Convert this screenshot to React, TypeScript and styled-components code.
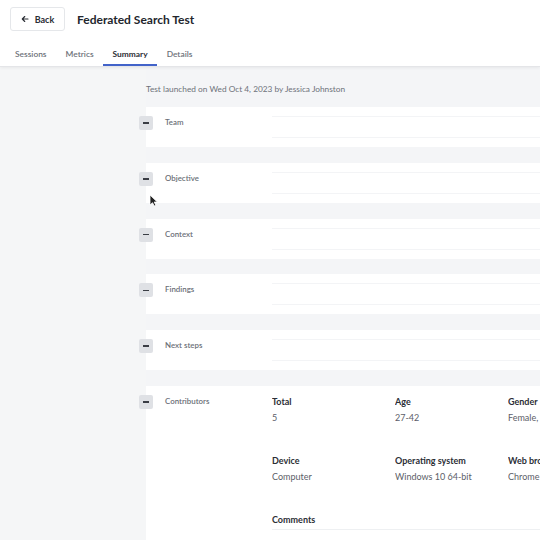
import React from "react";
import styled, { createGlobalStyle } from "styled-components";

const GlobalStyle = createGlobalStyle`
  * { box-sizing: border-box; }
  html, body { margin: 0; padding: 0; }
  body {
    font-family: "Lato", "Liberation Sans", sans-serif;
    background: #f4f5f7;
    color: #2b2e35;
    overflow: hidden;
  }
`;

const Page = styled.div`
  width: 540px;
  height: 540px;
  display: flex;
  flex-direction: column;
  position: relative;
  overflow: hidden;
`;

const Header = styled.header`
  background: #fff;
  border-bottom: 1px solid #e4e5e8;
  box-shadow: 0 1px 3px rgba(0, 0, 0, 0.06);
  position: relative;
  z-index: 1;
`;

const TopRow = styled.div`
  height: 40px;
  display: flex;
  align-items: center;
  gap: 12px;
  padding: 0 0 2px 10px;
`;

const BackButton = styled.button`
  height: 24px;
  width: 55px;
  display: flex;
  align-items: center;
  justify-content: center;
  gap: 6px;
  border: 1px solid #e5e7ea;
  border-radius: 3px;
  background: #fff;
  font-family: inherit;
  font-weight: 700;
  font-size: 9px;
  color: #2b2e35;
  padding: 0;
`;

const Title = styled.h1`
  margin: 0;
  font-size: 12px;
  font-weight: 700;
  color: #23262d;
`;

const Tabs = styled.nav`
  display: flex;
  height: 26px;
  padding-left: 5.5px;
`;

const Tab = styled.div<{ $active?: boolean }>`
  padding: 4px 9.5px 0;
  display: flex;
  align-items: center;
  font-size: 8.4px;
  font-weight: ${(p) => (p.$active ? 700 : 600)};
  color: ${(p) => (p.$active ? "#2b2e35" : "#6e727a")};
  border-bottom: 2px solid ${(p) => (p.$active ? "#4263c9" : "transparent")};
`;

const Body = styled.main`
  flex: 1;
  display: grid;
  grid-template-columns: 146px 1fr;
`;

const Side = styled.div`
  background: #f5f6f7;
`;

const Content = styled.div`
  padding-top: 16px;
  display: flex;
  flex-direction: column;
`;

const Launched = styled.div`
  font-size: 8.3px;
  line-height: 12px;
  color: #6e727a;
  margin-bottom: 12px;
`;

const Cards = styled.div`
  display: flex;
  flex-direction: column;
  gap: 15.8px;
`;

const Card = styled.section<{ $grow?: boolean }>`
  background: #fff;
  height: ${(p) => (p.$grow ? "auto" : "40px")};
  padding-top: 9px;
  padding-bottom: ${(p) => (p.$grow ? "40px" : "0")};
  display: flex;
  align-items: flex-start;
`;

const Toggle = styled.button`
  width: 14px;
  height: 14px;
  margin-left: -7px;
  border: none;
  border-radius: 2px;
  background: #dfe1e5;
  padding: 0;
  display: flex;
  align-items: center;
  justify-content: center;
  flex-shrink: 0;

  &::after {
    content: "";
    width: 6px;
    height: 1.5px;
    background: #3a3d44;
  }
`;

const Label = styled.div`
  width: 107px;
  margin-left: 12px;
  font-size: 7.9px;
  font-weight: 600;
  line-height: 13px;
  color: #6b6f77;
  flex-shrink: 0;
`;

const Field = styled.div`
  flex: 1;
  height: 22px;
  border-top: 1px solid #f3f4f6;
  border-bottom: 1px solid #f3f4f6;
`;

const Stats = styled.div`
  flex: 1;
  display: grid;
  grid-template-columns: 123px 113px 1fr;
  row-gap: 29px;
`;

const Stat = styled.div`
  display: flex;
  flex-direction: column;
  gap: 2px;
  white-space: nowrap;
  overflow: hidden;
`;

const StatTitle = styled.div`
  font-size: 9px;
  font-weight: 700;
  line-height: 14px;
  color: #2b2e35;
`;

const StatValue = styled.div`
  font-size: 9px;
  line-height: 14px;
  color: #5c6068;
`;

const Comments = styled.div`
  grid-column: 1 / -1;
  font-size: 9px;
  font-weight: 700;
  line-height: 14px;
  color: #2b2e35;
  border-bottom: 1px solid #eef0f2;
  padding-bottom: 2px;
`;

const Cursor = styled.svg`
  position: absolute;
  left: 149px;
  top: 194px;
  z-index: 2;
`;

const sections = ["Team", "Objective", "Context", "Findings", "Next steps"];

const stats = [
  { title: "Total", value: "5" },
  { title: "Age", value: "27-42" },
  { title: "Gender", value: "Female, Male" },
  { title: "Device", value: "Computer" },
  { title: "Operating system", value: "Windows 10 64-bit" },
  { title: "Web browser", value: "Chrome" },
];

export default function App() {
  return (
    <Page>
      <GlobalStyle />
      <Header>
        <TopRow>
          <BackButton>
            <svg width="8" height="8" viewBox="0 0 16 16" fill="none">
              <path
                d="M14 8H3M7.5 3L2.5 8l5 5"
                stroke="#2b2e35"
                strokeWidth="2.2"
                strokeLinecap="round"
                strokeLinejoin="round"
              />
            </svg>
            Back
          </BackButton>
          <Title>Federated Search Test</Title>
        </TopRow>
        <Tabs>
          <Tab>Sessions</Tab>
          <Tab>Metrics</Tab>
          <Tab $active>Summary</Tab>
          <Tab>Details</Tab>
        </Tabs>
      </Header>
      <Body>
        <Side />
        <Content>
          <Launched>Test launched on Wed Oct 4, 2023 by Jessica Johnston</Launched>
          <Cards>
            {sections.map((s) => (
              <Card key={s}>
                <Toggle aria-label={`Collapse ${s}`} />
                <Label>{s}</Label>
                <Field />
              </Card>
            ))}
            <Card $grow>
              <Toggle aria-label="Collapse Contributors" />
              <Label>Contributors</Label>
              <Stats>
                {stats.map((st) => (
                  <Stat key={st.title}>
                    <StatTitle>{st.title}</StatTitle>
                    <StatValue>{st.value}</StatValue>
                  </Stat>
                ))}
                <Comments>Comments</Comments>
              </Stats>
            </Card>
          </Cards>
        </Content>
      </Body>
      <Cursor width="9" height="13" viewBox="0 0 9 13">
        <path d="M1 1v10l2.5-2.3L5.3 12l1.6-.7L5.2 8H8.3z" fill="#222" stroke="#fff" strokeWidth="0.8" />
      </Cursor>
    </Page>
  );
}
